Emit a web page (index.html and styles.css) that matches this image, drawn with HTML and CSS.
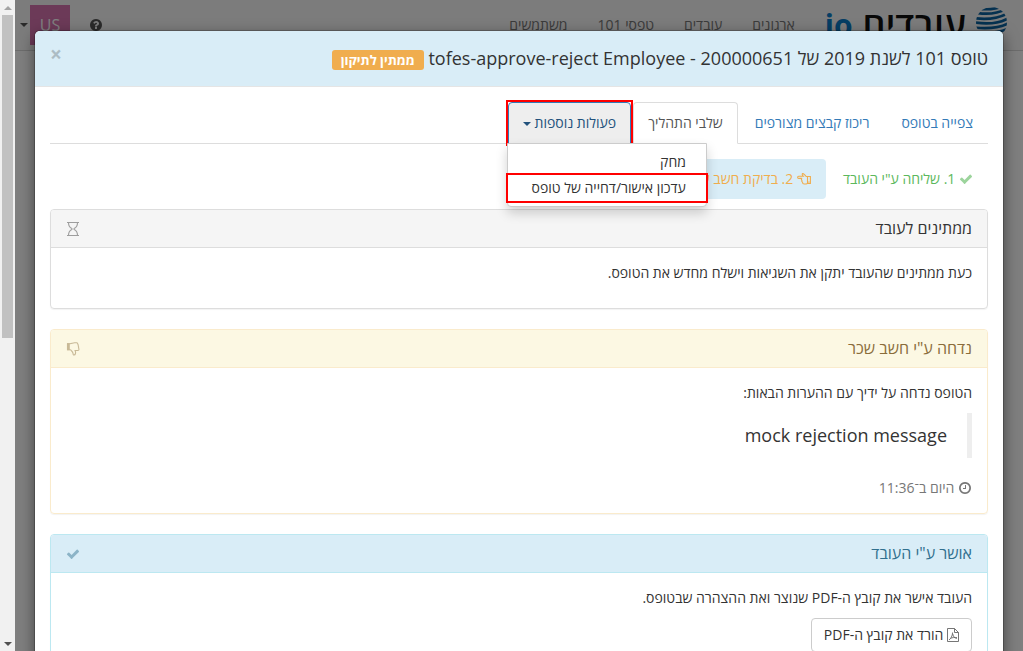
FILE: index.html
```html
<!DOCTYPE html>
<html lang="he" dir="rtl">
<head>
<meta charset="utf-8">
<title>טופס 101</title>
<link rel="stylesheet" href="styles.css">
</head>
<body>
<svg class="sprite" aria-hidden="true">
  <symbol id="check" viewBox="0 0 1792 1792"><path d="M1671 566q0 40-28 68l-724 724-136 136q-28 28-68 28t-68-28l-136-136-362-362q-28-28-28-68t28-68l136-136q28-28 68-28t68 28l294 295 656-657q28-28 68-28t68 28l136 136q28 28 28 68z"/></symbol>
</svg>
<div class="app">
  <div class="page">
    <nav class="navbar">
      <div class="brand">
        <svg class="globe" viewBox="0 0 30 30" aria-hidden="true">
          <clipPath id="ball"><circle cx="15" cy="15" r="15"/></clipPath>
          <g clip-path="url(#ball)" fill="none" stroke="#0b62a0" stroke-width="2.6">
            <path d="M5 2Q17 3 27 -1"/><path d="M2 6Q18 8 29 2"/><path d="M0 11Q18 13 31 6"/><path d="M-1 15Q18 18 31 11"/><path d="M-1 20Q19 22 31 16"/><path d="M1 25Q20 26 31 21"/><path d="M4 30Q20 30 30 26"/>
          </g>
        </svg>
        <span class="brand-name">עובדים</span>
        <span class="brand-io" dir="ltr">io</span>
      </div>
      <a class="nav-link" href="#">ארגונים</a>
      <a class="nav-link" href="#">עובדים</a>
      <a class="nav-link" href="#">טפסי 101</a>
      <a class="nav-link" href="#">משתמשים</a>
      <div class="account">
        <svg class="icon help" viewBox="0 0 1792 1792" aria-hidden="true"><path d="M1024 1376v-192q0-14-9-23t-23-9h-192q-14 0-23 9t-9 23v192q0 14 9 23t23 9h192q14 0 23-9t9-23zm256-672q0-88-55.5-163t-138.5-116-170-41q-243 0-371 213-15 24 8 42l132 100q7 6 19 6 16 0 25-12 53-68 86-92 34-24 86-24 48 0 85.5 26t37.5 59q0 38-20 61t-68 45q-63 28-115.5 86.5t-52.5 125.5v36q0 14 9 23t23 9h192q14 0 23-9t9-23q0-19 21.5-49.5t54.5-49.5q32-18 49-28.5t46-35 44.5-48 28-60.5 12.5-81zm384 192q0 209-103 385.5t-279.5 279.5-385.5 103-385.5-103-279.5-279.5-103-385.5 103-385.5 279.5-279.5 385.5-103 385.5 103 279.5 279.5 103 385.5z"/></svg>
        <span class="avatar">US</span>
        <span class="caret"></span>
      </div>
    </nav>
    <div class="backdrop">
      <section class="modal" role="dialog" aria-labelledby="modal-title">
        <header class="modal-header">
          <h1 class="modal-title" id="modal-title">טופס 101 לשנת 2019 של <bdi>tofes-approve-reject Employee - 200000651</bdi> <span class="label">ממתין לתיקון</span></h1>
          <button class="close" type="button" aria-label="סגור">×</button>
        </header>
        <div class="modal-body">
          <ul class="tabs">
            <li class="tab"><a class="tab-link" href="#">צפייה בטופס</a></li>
            <li class="tab"><a class="tab-link" href="#">ריכוז קבצים מצורפים</a></li>
            <li class="tab"><a class="tab-link active" href="#">שלבי התהליך</a></li>
            <li class="tab marked">
              <button class="tab-link open" type="button">פעולות נוספות <span class="caret"></span></button>
              <ul class="menu">
                <li><a class="menu-link" href="#">מחק</a></li>
                <li class="marked"><a class="menu-link" href="#">עדכון אישור/דחייה של טופס</a></li>
              </ul>
            </li>
          </ul>
          <ol class="steps">
            <li class="step done"><svg class="icon faded" aria-hidden="true"><use href="#check"/></svg> 1. שליחה ע"י העובד</li>
            <li class="step current"><svg class="icon" viewBox="0 0 14 14" aria-hidden="true"><path class="line" d="M10.5 4.500H9.200C8.500 3.500 7.700 2.700 6.400 1.700Q5.300 1.200 5.200 2.300Q5.300 3.300 6.200 4.200H1.700Q.6 4.300.6 5.300T1.700 6.400H5.200M4.800 6.400Q3.900 7.500 4.900 8.500Q4.500 9.700 5.500 10.200Q5.500 12 7.200 12H9Q9.800 11.600 10.500 11.500M10.500 4.500V11.500H13.400V4.500Z"/><path d="M11.300 9.500h1.200v1.200h-1.200z"/></svg> 2. בדיקת חשב שכר</li>
          </ol>

          <article class="panel">
            <header class="panel-head"><h2 class="panel-title">ממתינים לעובד</h2>
              <svg class="icon state" viewBox="0 0 14 14" aria-hidden="true"><path class="line" d="M1 .5H13M1 13.500H13M2.500 .5C2.500 4 4 5.700 5.900 6.500V7.500C4 8.300 2.500 10 2.500 13.500M11.500 .5C11.500 4 10 5.700 8.100 6.500V7.500C10 8.300 11.500 10 11.500 13.500"/></svg>
            </header>
            <div class="panel-body"><p class="text">כעת ממתינים שהעובד יתקן את השגיאות וישלח מחדש את הטופס.</p></div>
          </article>

          <article class="panel warning">
            <header class="panel-head"><h2 class="panel-title">נדחה ע"י חשב שכר</h2>
              <svg class="icon state" viewBox="0 0 14 14" aria-hidden="true"><path class="line" d="M4 7.800H1.500V1.700H4C5.800 1.500 7 .7 8.600 .7H10.500Q11.900 .8 11.800 2.200Q12.600 3 12.200 4Q13 5 12.500 6Q13.200 6.800 12.900 7.700Q12.500 8.500 11.700 8.500H9.100Q9.900 10.500 9.500 11.500Q9.100 13.200 7.500 12.900Q7 12.500 7 11.200Q6.500 9.800 5.600 9Q4.800 7.800 4 7.800Z"/><path d="M1 1.200h2.800v7H1z"/></svg>
            </header>
            <div class="panel-body">
              <p class="text">הטופס נדחה על ידיך עם ההערות הבאות:</p>
              <blockquote class="quote">mock rejection message</blockquote>
              <div class="time"><svg class="icon" viewBox="0 0 1792 1792" aria-hidden="true"><path d="M1024 544v448q0 14-9 23t-23 9h-320q-14 0-23-9t-9-23v-64q0-14 9-23t23-9h224v-352q0-14 9-23t23-9h64q14 0 23 9t9 23zm416 352q0-148-73-273t-198-198-273-73-273 73-198 198-73 273 73 273 198 198 273 73 273-73 198-198 73-273zm224 0q0 209-103 385.500t-279.500 279.500-385.500 103-385.500-103-279.500-279.500-103-385.500 103-385.500 279.500-279.500 385.500-103 385.500 103 279.500 279.500 103 385.500z"/></svg> היום ב־11:36</div>
            </div>
          </article>

          <article class="panel info">
            <header class="panel-head"><h2 class="panel-title">אושר ע"י העובד</h2>
              <svg class="icon state" aria-hidden="true"><use href="#check"/></svg>
            </header>
            <div class="panel-body">
              <p class="text">העובד אישר את קובץ ה-PDF שנוצר ואת ההצהרה שבטופס.</p>
              <button class="btn" type="button"><svg class="icon file" viewBox="0 0 12 14" aria-hidden="true"><path class="line thin" d="M.5 .5H7.500L11.500 4.500V13.500H.5ZM7.500 .5V4.500H11.500M5.600 4.500C5.600 8 3.500 11 2 12M5.800 6C6.200 9 8 10.300 10 10.300M3.500 10.300C5.500 9.500 7.500 9.300 10 9.700"/></svg> הורד את קובץ ה-PDF</button>
            </div>
          </article>
        </div>
      </section>
    </div>
  </div>
  <div class="scrollbar" aria-hidden="true">
    <span class="arrow up"></span>
    <div class="track"><div class="thumb"></div></div>
    <span class="arrow down"></span>
  </div>
</div>
</body>
</html>
```
FILE: styles.css
```css
* { box-sizing: border-box; }

body {
  margin: 0;
  font: 14px/20px "Open Sans", "Noto Sans", sans-serif;
  color: #333;
}

ul, ol { list-style: none; margin: 0; padding: 0; }
a { color: #337ab7; text-decoration: none; }
button { font: inherit; color: inherit; cursor: pointer; }

.sprite { position: absolute; width: 0; height: 0; }

.app { display: flex; height: 100vh; overflow: hidden; }
.page { position: relative; flex: 1; min-width: 0; background: #fff; }

/* Scroll bar */
.scrollbar { display: flex; flex-direction: column; width: 15px; background: #f1f1f1; }
.track { flex: 1; padding: 0 2px; }
.thumb { height: 52%; background: #c1c1c1; }
.arrow { display: flex; align-items: center; justify-content: center; height: 15px; }
.arrow::before { content: ""; border: 4px solid transparent; border-top-width: 0; border-bottom: 4px solid #a3a3a3; }
.arrow.down::before { border-bottom-width: 0; border-top: 4px solid #505050; }

/* Top bar */
.navbar {
  display: flex;
  align-items: center;
  height: 51px;
  padding: 0 16px 0 5px;
  background: #f8f8f8;
  border-bottom: 1px solid #d8d8d8;
}
.brand { display: flex; align-items: center; gap: 10px; margin-left: 15px; }
.globe { width: 31px; height: 31px; margin-bottom: 6px; }
.brand-name { font-size: 36px; line-height: 50px; color: #111; font-weight: 600; }
.brand-io { font-size: 30px; line-height: 50px; color: #0b7cc9; font-weight: 700; }
.nav-link { padding: 0 15px; color: #777; white-space: nowrap; }
.account { display: flex; align-items: center; margin-right: auto; color: #555; }
.help { margin-left: 19px; }
.avatar {
  width: 40px;
  height: 40px;
  margin-left: 2px;
  background: #d874b0;
  color: #fff;
  font: 16px/40px "Open Sans", sans-serif;
  text-align: center;
}
.caret { display: inline-block; border: 4px solid transparent; border-top-color: currentColor; border-bottom: 0; vertical-align: middle; }

/* Dialog */
.backdrop { position: absolute; inset: 0; padding: 31px 20px 0; background: rgba(0, 0, 0, .5); overflow: hidden; }
.modal { background: #fff; border-radius: 5px; box-shadow: 0 5px 15px rgba(0, 0, 0, .5), 0 0 0 1px rgba(0, 0, 0, .2); }
.modal-header {
  display: flex;
  justify-content: space-between;
  align-items: flex-start;
  padding: 15px;
  background: #d9edf7;
  border-bottom: 1px solid #e5e5e5;
  border-radius: 5px 5px 0 0;
}
.modal-title { margin: 0; font-size: 18px; line-height: 25px; font-weight: 400; }
.label { display: inline-block; padding: 0 9px; font-size: 13px; line-height: 20px; font-weight: 700; color: #fff; background: #f0ad4e; border-radius: 3px; }
.close { padding: 0; border: 0; background: none; font-size: 21px; line-height: 16px; font-weight: 700; color: #000; opacity: .2; }
.modal-body { padding: 15px; }

/* Tabs */
.tabs { display: flex; border-bottom: 1px solid #ddd; }
.tab { position: relative; margin: 0 0 -1px 2px; }
.tab-link { display: block; padding: 10px 14px; border: 1px solid transparent; border-radius: 4px 4px 0 0; line-height: 20px; white-space: nowrap; }
.tab-link.active { color: #555; background: #fff; border-color: #ddd #ddd #fff; }
.tab-link.open { color: #23527c; background: #eee; border-color: #337ab7; }
.marked { outline: 2px solid #f00; }
.menu {
  position: absolute;
  top: 41px;
  left: -1px;
  z-index: 1;
  min-width: 200px;
  padding: 5px 0;
  background: #fff;
  border: 1px solid #ccc;
  border-radius: 0 0 4px 4px;
  box-shadow: 0 6px 12px rgba(0, 0, 0, .18);
}
.menu-link { display: block; padding: 3px 20px; color: #333; white-space: nowrap; }

/* Process steps */
.steps { display: flex; gap: 2px; margin: 15px 0 10px; }
.step { padding: 10px 15px; border-radius: 4px; white-space: nowrap; }
.done { color: #5cb85c; }
.current { color: #f0ad4e; background: #d9edf7; }

.icon { width: 14px; height: 14px; fill: currentColor; vertical-align: -2px; overflow: visible; }
.file { width: 12px; }
.line { fill: none; stroke: currentColor; stroke-width: 1.1; }
.thin { stroke-width: .9; }
.faded { opacity: .6; }

/* Panels */
.panel { margin-bottom: 20px; border: 1px solid #ddd; border-radius: 4px; box-shadow: 0 1px 1px rgba(0, 0, 0, .05); }
.panel-head {
  display: flex;
  align-items: center;
  justify-content: space-between;
  padding: 10px 15px;
  color: #333;
  background: #f5f5f5;
  border-bottom: 1px solid #ddd;
  border-radius: 3px 3px 0 0;
}
.panel-title { margin: 0; font-size: 16px; line-height: 17px; font-weight: 400; }
.state { opacity: .45; }
.panel-body { padding: 15px; }
.text { margin: 0 0 10px; }

.warning, .warning .panel-head { border-color: #faebcc; }
.warning .panel-head { color: #8a6d3b; background: #fcf8e3; }
.info, .info .panel-head { border-color: #bce8f1; }
.info .panel-head { color: #31708f; background: #d9edf7; }

.quote { margin: 0 0 20px; padding: 10px 20px; border-right: 5px solid #eee; font-size: 18px; line-height: 25px; }
.time { color: #777; }
.btn { padding: 6px 12px; border: 1px solid #ccc; border-radius: 4px; background: #fff; line-height: 20px; }
.btn .icon { color: #666; }
```
